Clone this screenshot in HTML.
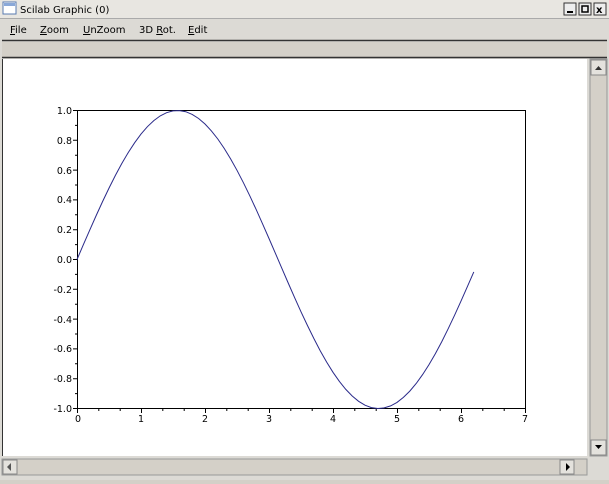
<!DOCTYPE html>
<html><head><style>
body{margin:0;width:609px;height:480px;overflow:hidden;background:#d4d0c8;font-family:"DejaVu Sans","Liberation Sans",sans-serif;}
</style></head><body>
<svg width="609" height="480" xmlns="http://www.w3.org/2000/svg" font-family="DejaVu Sans, Liberation Sans, sans-serif">
<rect width="609" height="480" fill="#dcdad5"/>
<!-- title bar -->
<rect x="0" y="0" width="609" height="18" fill="#e8e6e1"/>
<rect x="3" y="2" width="13" height="12" fill="#fff" stroke="#5a7bb0"/>
<rect x="4" y="3" width="11" height="3" fill="#8aa8d8"/>
<text x="20" y="13" font-size="10" fill="#000">Scilab Graphic (0)</text>
<g stroke="#333" fill="#eee"><rect x="564" y="3" width="12" height="12"/><rect x="579" y="3" width="12" height="12"/><rect x="594" y="3" width="12" height="12"/></g>
<rect x="567" y="11" width="6" height="2" fill="#000"/>
<rect x="582" y="6" width="6" height="6" fill="none" stroke="#000" stroke-width="1.5"/>
<text x="596" y="13" font-size="10" font-weight="bold">x</text>
<line x1="0" y1="18.5" x2="609" y2="18.5" stroke="#aaa"/>
<!-- menu -->
<g font-size="10" fill="#000">
<text x="10" y="33"><tspan text-decoration="underline">F</tspan>ile</text>
<text x="40" y="33"><tspan text-decoration="underline">Z</tspan>oom</text>
<text x="83" y="33"><tspan text-decoration="underline">U</tspan>nZoom</text>
<text x="139" y="33">3D <tspan text-decoration="underline">R</tspan>ot.</text>
<text x="188" y="33"><tspan text-decoration="underline">E</tspan>dit</text>
</g>
<line x1="2" y1="40.5" x2="607" y2="40.5" stroke="#333" stroke-width="1.5"/>
<rect x="2" y="42" width="605" height="15" fill="#d4d0c8"/>
<line x1="2" y1="57.5" x2="607" y2="57.5" stroke="#333" stroke-width="1.5"/>
<!-- canvas -->
<rect x="2" y="59" width="585" height="397" fill="#fff"/>
<line x1="2.5" y1="59" x2="2.5" y2="456" stroke="#333"/>
<!-- vscroll -->
<rect x="590" y="59" width="17" height="397" fill="#d4d0c8" stroke="#999"/>
<rect x="591" y="60" width="15" height="15" fill="#e4e2dd" stroke="#888"/>
<path d="M595 70 L598.5 66 L602 70Z" fill="#333"/>
<rect x="591" y="440" width="15" height="15" fill="#e4e2dd" stroke="#888"/>
<path d="M595 445 L602 445 L598.5 449Z" fill="#000"/>
<!-- hscroll -->
<rect x="2" y="459" width="585" height="16" fill="#d4d0c8" stroke="#999"/>
<rect x="3" y="460" width="14" height="14" fill="#e4e2dd" stroke="#888"/>
<path d="M11 463 L7 467 L11 471Z" fill="#555"/>
<rect x="560" y="460" width="14" height="14" fill="#e4e2dd" stroke="#888"/>
<path d="M578 463 L582 467 L578 471Z" fill="#000" transform="translate(-12,0)"/>
<!-- plot -->
<rect x="77.5" y="110.5" width="448" height="298" fill="none" stroke="#000"/>
<g stroke="#000">
<path d="M73 110.5h4M73 140.3h4M73 170.1h4M73 199.9h4M73 229.7h4M73 259.5h4M73 289.3h4M73 319.1h4M73 348.9h4M73 378.7h4M73 408.5h4"/>
<path d="M75 125.4h2M75 155.2h2M75 185h2M75 214.8h2M75 244.6h2M75 274.4h2M75 304.2h2M75 334h2M75 363.8h2M75 393.6h2"/>
<path id="xt" d="M77.5 408v5M141.5 408v5M205.5 408v5M269.5 408v5M333.5 408v5M397.5 408v5M461.5 408v5M525.5 408v5"/>
<path d="M98.8 408v3M120.2 408v3M162.8 408v3M184.2 408v3M226.8 408v3M248.2 408v3M290.8 408v3M312.2 408v3M354.8 408v3M376.2 408v3M418.8 408v3M440.2 408v3M482.8 408v3M504.2 408v3"/>
</g>
<g font-size="9.5" fill="#000" text-anchor="end">
<text x="72" y="114">1.0</text><text x="72" y="144">0.8</text><text x="72" y="174">0.6</text><text x="72" y="203">0.4</text><text x="72" y="233">0.2</text><text x="72" y="263">0.0</text><text x="72" y="293">-0.2</text><text x="72" y="323">-0.4</text><text x="72" y="352">-0.6</text><text x="72" y="382">-0.8</text><text x="72" y="412">-1.0</text>
</g>
<g font-size="9.5" fill="#000" text-anchor="middle">
<text x="78" y="422">0</text><text x="141" y="422">1</text><text x="205" y="422">2</text><text x="269" y="422">3</text><text x="333" y="422">4</text><text x="397" y="422">5</text><text x="461" y="422">6</text><text x="525" y="422">7</text>
</g>
<polyline fill="none" stroke="#2a2a8a" stroke-width="1" points="77.0,259.5 83.4,244.6 89.8,229.9 96.2,215.5 102.6,201.6 109.0,188.5 115.4,176.3 121.8,165.2 128.2,155.3 134.6,146.8 141.0,139.8 147.4,134.3 153.8,130.1 160.2,127.3 166.6,125.8 173.0,125.5 179.4,126.5 185.8,128.8 192.2,132.3 198.6,137.0 205.0,142.8 211.4,149.8 217.8,157.9 224.2,167.0 230.6,177.0 237.0,187.9 243.4,199.7 249.8,212.1 256.2,225.2 262.6,238.8 269.0,252.7"/>
</svg>
<script>
(function(){var p=[];for(var i=0;i<=62;i++){var x=i*0.1;p.push((77+64*x).toFixed(1)+","+(259.5-149*Math.sin(x)).toFixed(1));}
document.querySelector("polyline").setAttribute("points",p.join(" "));})();
</script>
</body></html>
